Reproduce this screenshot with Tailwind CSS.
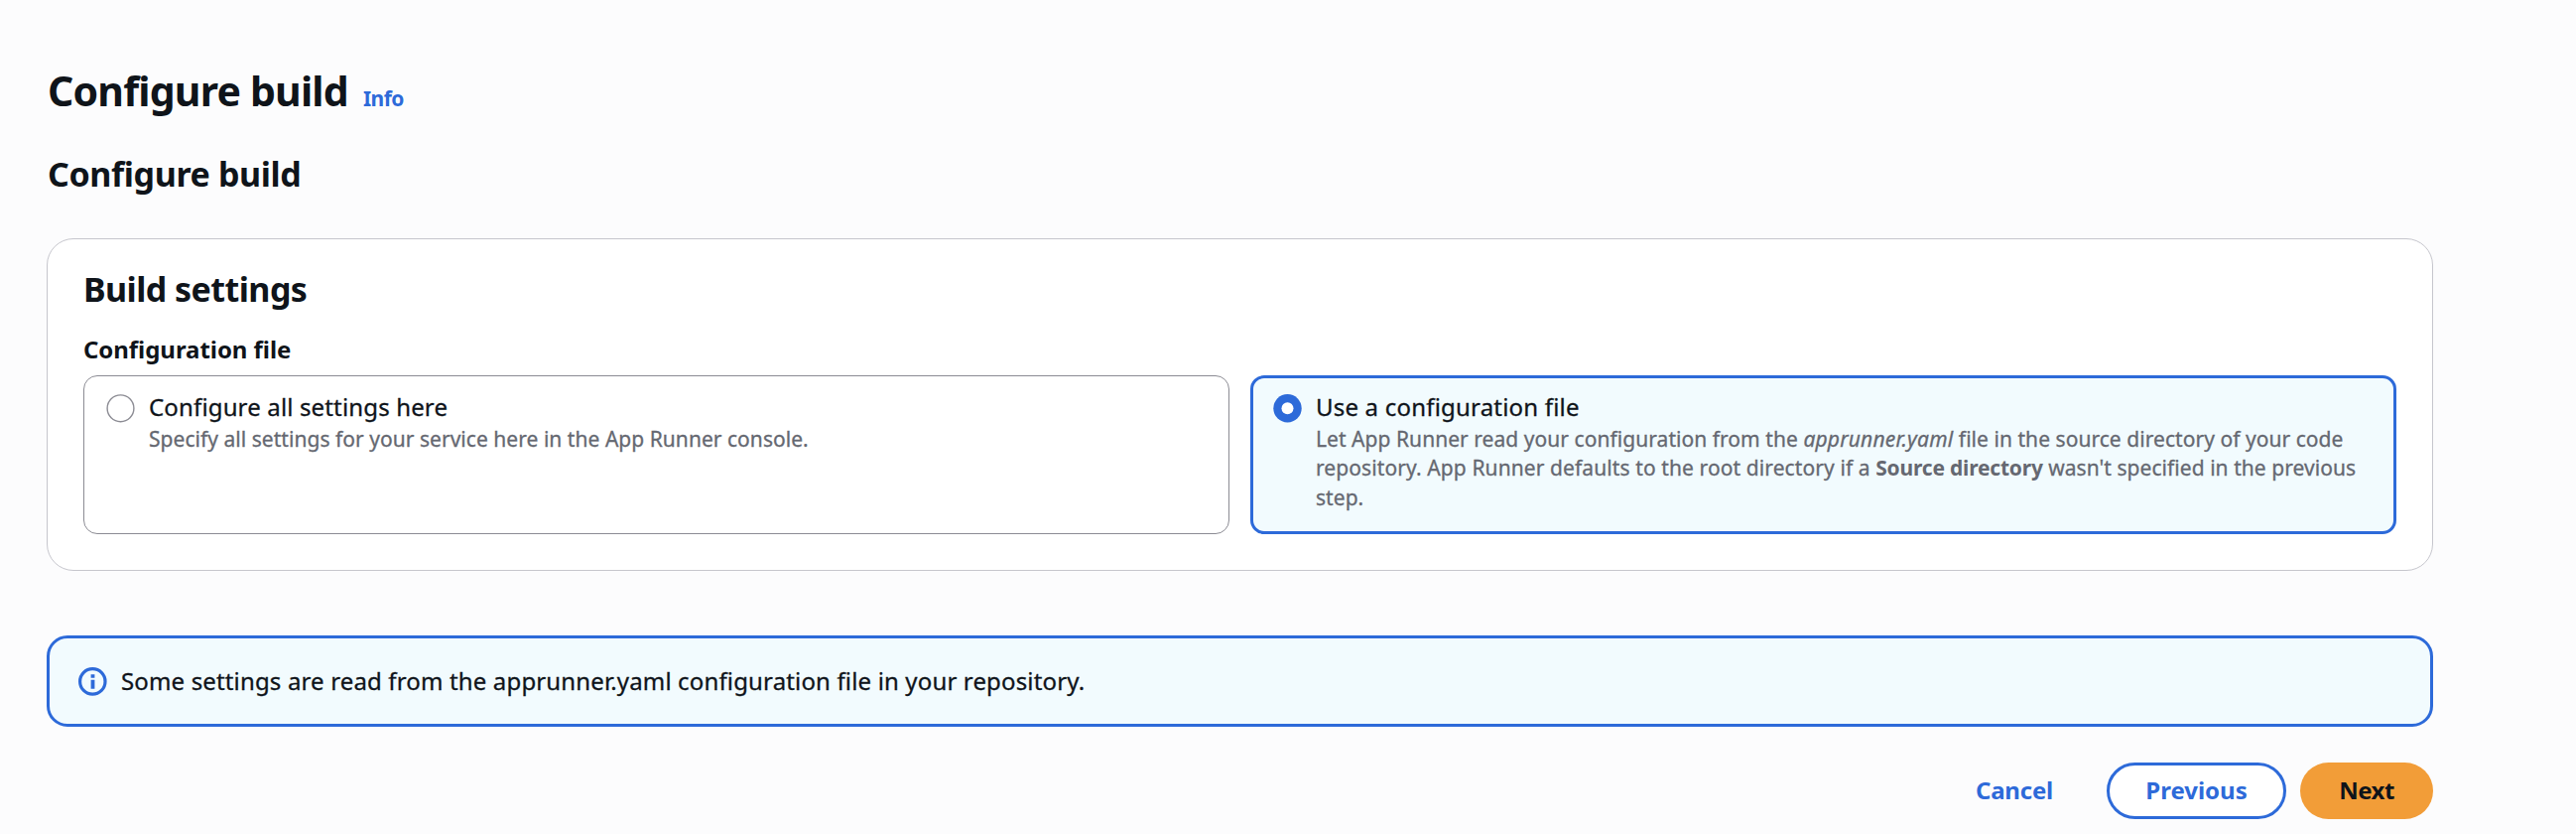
<!DOCTYPE html>
<html lang="en">
<head>
<meta charset="utf-8">
<title>Configure build</title>
<script src="https://cdn.jsdelivr.net/npm/@tailwindcss/browser@4"></script>
</head>
<body class="bg-[#fcfcfd] font-['Noto_Sans',sans-serif] text-[#0f141a]">
<main class="flex h-[840px] w-[2452px] flex-col overflow-hidden pl-[47px] pt-[66px]">
  <header class="flex h-[50px] items-baseline gap-[15px] whitespace-nowrap">
    <h1 class="pl-px text-[41px] font-bold leading-[50px] tracking-[-0.8px]">Configure build</h1>
    <a class="text-[21px] font-bold leading-[30px] tracking-[-0.5px] text-[#2d6ad9]">Info</a>
  </header>
  <h2 class="mt-[39px] pl-px text-[34px] font-bold leading-[40px] tracking-[-0.38px]">Configure build</h2>

  <section class="mt-[45px] h-[335px] rounded-[27px] border border-[#c6c6cd] bg-white px-9 pt-[30px]">
    <h2 class="text-[34px] font-bold leading-[40px] tracking-[-0.55px]">Build settings</h2>
    <h3 class="mt-[26px] text-[24px] font-bold leading-[30px] tracking-[-0.05px]">Configuration file</h3>
    <div class="mt-[11px] grid h-[160px] grid-cols-2 gap-[21px]">
      <label class="flex gap-[14px] rounded-[14px] border border-[#8c8c94] pl-[22px] pt-[16px]">
        <svg class="mt-[2px] size-[29px] shrink-0" viewBox="0 0 29 29"><circle cx="14.5" cy="14.3" r="13.4" fill="#fff" stroke="#8c8c94" stroke-width="1.4"/></svg>
        <span>
          <span class="block text-[24px] leading-[30px] tracking-[0.15px] [-webkit-text-stroke:0.3px_currentColor]">Configure all settings here</span>
          <span class="mt-[3px] block whitespace-nowrap text-[21px] leading-[29.33px] tracking-[0.04px] text-[#656871] [-webkit-text-stroke:0.3px_currentColor]">Specify all settings for your service here in the App Runner console.</span>
        </span>
      </label>
      <label class="flex gap-[14px] rounded-[14px] border-3 border-[#2d6ad9] bg-[#f2fbfe] pl-5 pt-[14px]">
        <svg class="mt-[2px] size-[29px] shrink-0" viewBox="0 0 29 29"><circle cx="14.5" cy="14.3" r="14.2" fill="#2d6ad9"/><circle cx="14.5" cy="14.3" r="6" fill="#fff"/></svg>
        <span>
          <span class="block text-[24px] leading-[30px] tracking-[0.2px] [-webkit-text-stroke:0.3px_currentColor]">Use a configuration file</span>
          <span class="mt-[3px] block whitespace-nowrap text-[21px] leading-[29.33px] tracking-[0.05px] text-[#656871] [-webkit-text-stroke:0.3px_currentColor]">Let App Runner read your configuration from the <em class="tracking-[0.19px]">apprunner.yaml</em> file in the source directory of your code<br><span class="tracking-[0.1px]">repository. App Runner defaults to the root directory if a </span><b class="tracking-[-0.2px] [-webkit-text-stroke:0px]">Source directory</b> wasn't specified in the previous<br>step.</span>
        </span>
      </label>
    </div>
  </section>

  <section class="mt-[65px] flex h-[92px] items-center gap-[14px] rounded-[21px] border-3 border-[#2d6ad9] bg-[#f2fbfe] pl-[29px]">
    <svg class="size-[29px]" viewBox="0 0 29 29" fill="none" stroke="#2d6ad9">
      <circle cx="14.3" cy="14.4" r="12.7" stroke-width="3.2"/>
      <path d="M14.5 7.4v3.4M14.5 12.8v9M12 14.2h2.5M12 21.2h5" stroke-width="0"/>
      <path d="M14.5 7.3v3.5M14.5 12.8v9" stroke-width="3.8"/>
    </svg>
    <p class="-mt-px text-[24px] leading-[30px] tracking-[0.15px] [-webkit-text-stroke:0.3px_currentColor]">Some settings are read from the apprunner.yaml configuration file in your repository.</p>
  </section>

  <footer class="mt-9 flex h-[57px] justify-end text-[24px] font-bold leading-[55px]">
    <button class="mr-[54px] pb-[2px] tracking-[-0.2px] text-[#2d6ad9]">Cancel</button>
    <button class="mr-[14px] flex w-[181px] items-center justify-center rounded-full border-3 border-[#2d6ad9] bg-white pb-[2px] text-[#2d6ad9]">Previous</button>
    <button class="w-[134px] rounded-full bg-[#f29d38] pb-[2px] tracking-[-0.5px]">Next</button>
  </footer>
</main>
</body>
</html>
